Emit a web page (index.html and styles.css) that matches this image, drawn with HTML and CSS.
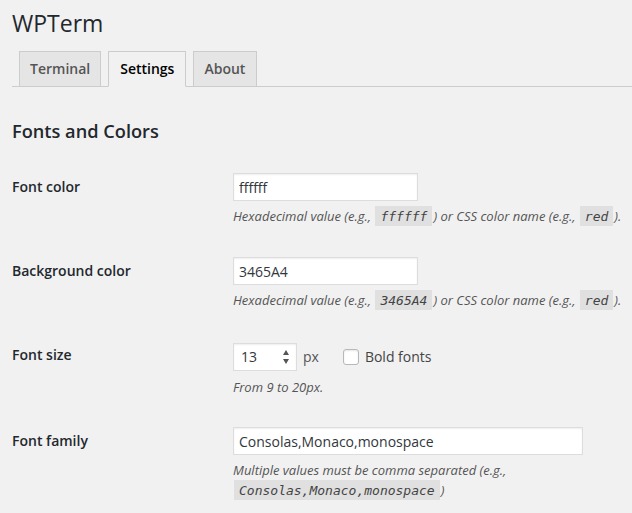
FILE: index.html
```html
<!DOCTYPE html>
<html>
<head>
<meta charset="utf-8">
<title>WPTerm</title>
<link rel="stylesheet" href="styles.css">
</head>
<body>
<div class="wrap">
  <h1 class="title">WPTerm</h1>
  <nav class="tabs">
    <a class="tab">Terminal</a>
    <a class="tab active">Settings</a>
    <a class="tab">About</a>
  </nav>
  <h2 class="section">Fonts and Colors</h2>
  <div class="form">
    <div class="row">
      <div class="label">Font color</div>
      <div class="field">
        <input class="text short" type="text" value="ffffff">
        <p class="desc">Hexadecimal value (e.g., <code>ffffff</code>) or CSS color name (e.g., <code>red</code>).</p>
      </div>
    </div>
    <div class="row">
      <div class="label">Background color</div>
      <div class="field">
        <input class="text short" type="text" value="3465A4">
        <p class="desc">Hexadecimal value (e.g., <code>3465A4</code>) or CSS color name (e.g., <code>red</code>).</p>
      </div>
    </div>
    <div class="row">
      <div class="label">Font size</div>
      <div class="field">
        <div class="inline">
          <div class="num-wrap">
            <input class="text num" type="text" value="13">
            <span class="spin"><span class="up"></span><span class="down"></span></span>
          </div>
          <span class="unit">px</span>
          <label class="check"><input type="checkbox" class="cb"> Bold fonts</label>
        </div>
        <p class="desc">From 9 to 20px.</p>
      </div>
    </div>
    <div class="row">
      <div class="label">Font family</div>
      <div class="field">
        <input class="text wide" type="text" value="Consolas,Monaco,monospace">
        <p class="desc">Multiple values must be comma separated (e.g.,<br><code>Consolas,Monaco,monospace</code>)</p>
      </div>
    </div>
  </div>
</div>
</body>
</html>
```

FILE: styles.css
```css
html, body {
  margin: 0;
  padding: 0;
  background: #f1f1f1;
}
body {
  font-family: "Open Sans", "Noto Sans", sans-serif;
  font-size: 13px;
  color: #444;
  overflow: hidden;
}
.wrap {
  padding-left: 12px;
}
.title {
  margin: 0;
  padding: 9px 15px 4px 0;
  font-size: 23px;
  font-weight: 400;
  line-height: 29px;
  color: #23282d;
}
.tabs {
  display: flex;
  padding-top: 9px;
  border-bottom: 1px solid #ccc;
}
.tab {
  margin-left: 7px;
  margin-bottom: -1px;
  padding: 5px 10px;
  border: 1px solid #ccc;
  background: #e5e5e5;
  color: #555;
  font-size: 14px;
  font-weight: 600;
  line-height: 24px;
}
.tab.active {
  padding: 5px 11px;
  background: #f1f1f1;
  color: #000;
  border-bottom-color: #f1f1f1;
}
.tab:last-child {
  padding-right: 11px;
}
.section {
  margin: 32px 0 15px;
  font-size: 18.2px;
  font-weight: 600;
  line-height: 24px;
  color: #23282d;
}
.form {
  display: grid;
  grid-template-columns: 211px 1fr;
}
.row {
  display: contents;
}
.label {
  padding: 20px 10px 20px 0;
  font-size: 14px;
  font-weight: 600;
  line-height: 18px;
  color: #23282d;
}
.field {
  padding: 15px 10px 15px 10px;
}
.text {
  display: block;
  box-sizing: border-box;
  height: 28px;
  margin: 0;
  padding: 3px 5px;
  border: 1px solid #ddd;
  box-shadow: inset 0 1px 2px rgba(0,0,0,.07);
  background: #fff;
  color: #32373c;
  font-family: "Open Sans", "Noto Sans", sans-serif;
  font-size: 14px;
  outline: none;
}
.short { width: 185px; }
.wide { width: 350px; }
.desc {
  margin: 5px 0 0;
  font-size: 13px;
  font-style: italic;
  line-height: 20px;
  color: #555;
}
code {
  padding: 3px 5px 2px;
  margin: 0 1px;
  background: rgba(0,0,0,.07);
  font-family: Consolas, Monaco, "DejaVu Sans Mono", monospace;
  font-size: 13px;
  color: #444;
}
.inline {
  display: flex;
  align-items: center;
  height: 31px;
}
.num-wrap {
  position: relative;
}
.num {
  width: 64px;
  padding-left: 7px;
}
.spin {
  position: absolute;
  right: 8px;
  top: 7px;
  display: flex;
  flex-direction: column;
  gap: 4px;
}
.up, .down {
  width: 0;
  height: 0;
  border-left: 3.5px solid transparent;
  border-right: 3.5px solid transparent;
}
.up { border-bottom: 5px solid #555; }
.down { border-top: 5px solid #555; }
.unit {
  margin-left: 6px;
  font-size: 14px;
  color: #555;
}
.check {
  display: flex;
  align-items: center;
  margin-left: 24px;
  font-size: 14px;
  color: #444;
}
.cb {
  -webkit-appearance: none;
  appearance: none;
  width: 16px;
  height: 16px;
  margin: 0 6px 0 0;
  border: 1px solid #b4b9be;
  border-radius: 3px;
  background: #fff;
  box-shadow: inset 0 1px 2px rgba(0,0,0,.1);
}
```
